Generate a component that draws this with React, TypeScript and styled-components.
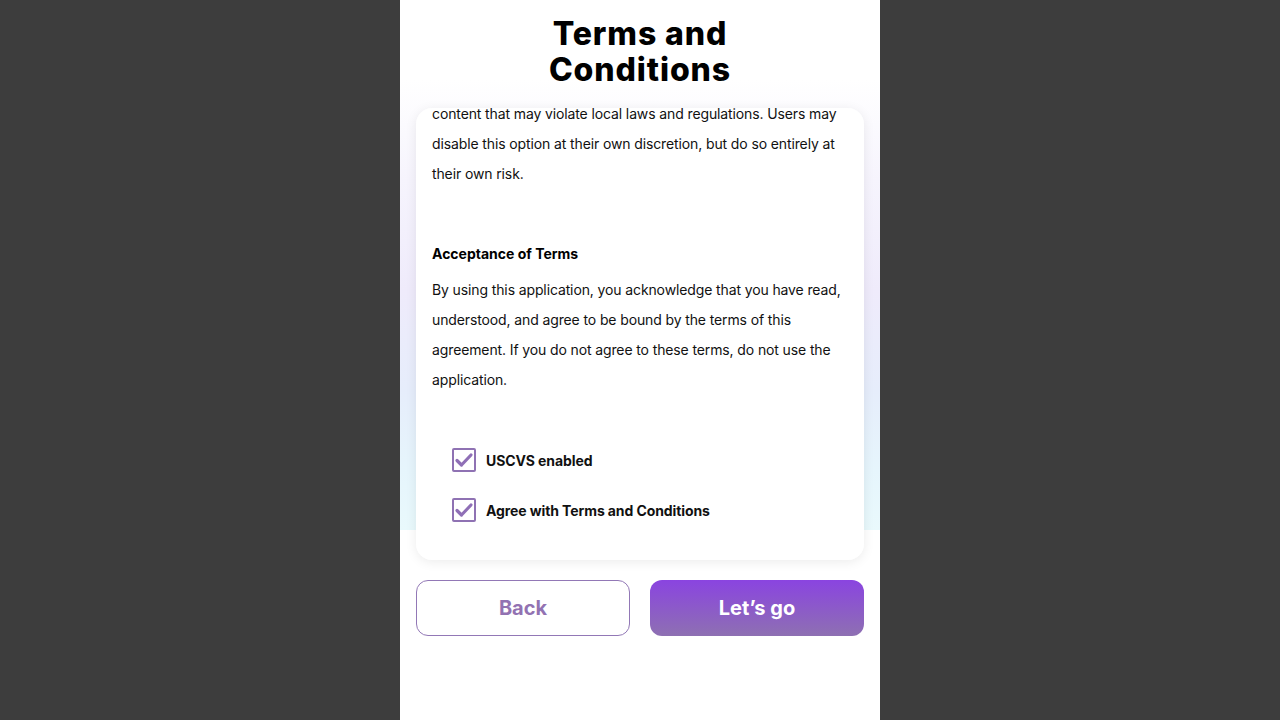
import React, { useLayoutEffect, useRef } from "react";
import styled, { createGlobalStyle } from "styled-components";

const Global = createGlobalStyle`
  html, body { margin: 0; padding: 0; background: #3d3d3d; }
  body { font-family: "Inter", "Liberation Sans", sans-serif; }
  * { box-sizing: border-box; }
`;

const Page = styled.div`
  height: 720px;
  display: flex;
  justify-content: center;
  background: #3d3d3d;
`;

const Phone = styled.div`
  width: 480px;
  height: 720px;
  background:
    linear-gradient(
      to bottom,
      #ffffff 0px,
      #ffffff 80px,
      #f6f4fd 180px,
      #efebfb 290px,
      #e6edfb 390px,
      #e6f5fc 470px,
      #e9f9fc 530px,
      #ffffff 530px
    );
  display: flex;
  flex-direction: column;
  padding: 16px 16px 0;
  overflow: hidden;
`;

const Title = styled.h1`
  margin: 0 auto;
  width: 240px;
  text-align: center;
  font-family: "Inter", sans-serif;
  font-weight: 800;
  font-size: 32px;
  line-height: 36px;
  letter-spacing: 0.9px;
  color: #000;
`;

const Card = styled.div`
  margin-top: 20px;
  height: 452px;
  background: #fff;
  border-radius: 16px;
  box-shadow: 0 2px 12px rgba(0, 0, 0, 0.08);
  overflow-y: auto;
  padding: 0 16px 16px;
  scrollbar-width: none;
  &::-webkit-scrollbar { display: none; }
`;

const Heading = styled.h2`
  margin: 55px 0 11px;
  font-size: 14px;
  line-height: 20px;
  font-weight: 700;
  color: #000;
  &:first-child { margin-top: 16px; }
`;

const Para = styled.p`
  margin: 0;
  font-size: 14px;
  line-height: 30px;
  letter-spacing: -0.12px;
  color: #111;
`;

const Checks = styled.div`
  margin-top: 53px;
  padding: 0 0 22px 20px;
  display: flex;
  flex-direction: column;
  gap: 26px;
`;

const CheckRow = styled.label`
  display: flex;
  align-items: center;
  gap: 10px;
  font-family: "Inter", sans-serif;
  font-weight: 700;
  font-size: 14px;
  color: #111;
  letter-spacing: -0.1px;
`;

const Box = styled.span`
  width: 24px;
  height: 24px;
  border: 2px solid #8f72b3;
  border-radius: 2px;
  display: flex;
  align-items: center;
  justify-content: center;
  flex-shrink: 0;
`;

const Buttons = styled.div`
  margin-top: 20px;
  display: grid;
  grid-template-columns: 1fr 1fr;
  gap: 20px;
`;

const Btn = styled.button<{ $primary?: boolean }>`
  height: 56px;
  border-radius: 12px;
  font-family: "Inter", sans-serif;
  font-weight: 700;
  font-size: 20px;
  cursor: pointer;
  border: ${(p) => (p.$primary ? "none" : "1px solid #9278b6")};
  color: ${(p) => (p.$primary ? "#ffffff" : "#9272b2")};
  background: ${(p) =>
    p.$primary ? "linear-gradient(to bottom, #8a44e0, #8e70b2)" : "#ffffff"};
`;

const Check = () => (
  <svg width="20" height="20" viewBox="0 0 20 20">
    <path
      d="M3 10.5 L7.5 15 L17 5"
      fill="none"
      stroke="#8f6fb6"
      strokeWidth="3.2"
      strokeLinecap="round"
      strokeLinejoin="round"
    />
  </svg>
);

export default function App() {
  const ref = useRef<HTMLDivElement>(null);
  useLayoutEffect(() => {
    if (ref.current) ref.current.scrollTop = ref.current.scrollHeight;
  }, []);
  return (
    <Page>
      <Global />
      <Phone>
        <Title>Terms and Conditions</Title>
        <Card ref={ref}>
          <Heading>USCVS Filter</Heading>
          <Para>
            The USCVS option is enabled by default. When enabled, the application
            filters and restricts access to
            <br />
            content that may violate local laws and regulations. Users may
            disable this option at their own discretion, but do so entirely at
            their own risk.
          </Para>
          <Heading>Acceptance of Terms</Heading>
          <Para>
            By using this application, you acknowledge that you have read,
            understood, and agree to be bound by the terms of this agreement. If
            you do not agree to these terms, do not use the application.
          </Para>
          <Checks>
            <CheckRow>
              <Box>
                <Check />
              </Box>
              USCVS enabled
            </CheckRow>
            <CheckRow>
              <Box>
                <Check />
              </Box>
              Agree with Terms and Conditions
            </CheckRow>
          </Checks>
        </Card>
        <Buttons>
          <Btn>Back</Btn>
          <Btn $primary>Let’s go</Btn>
        </Buttons>
      </Phone>
    </Page>
  );
}
